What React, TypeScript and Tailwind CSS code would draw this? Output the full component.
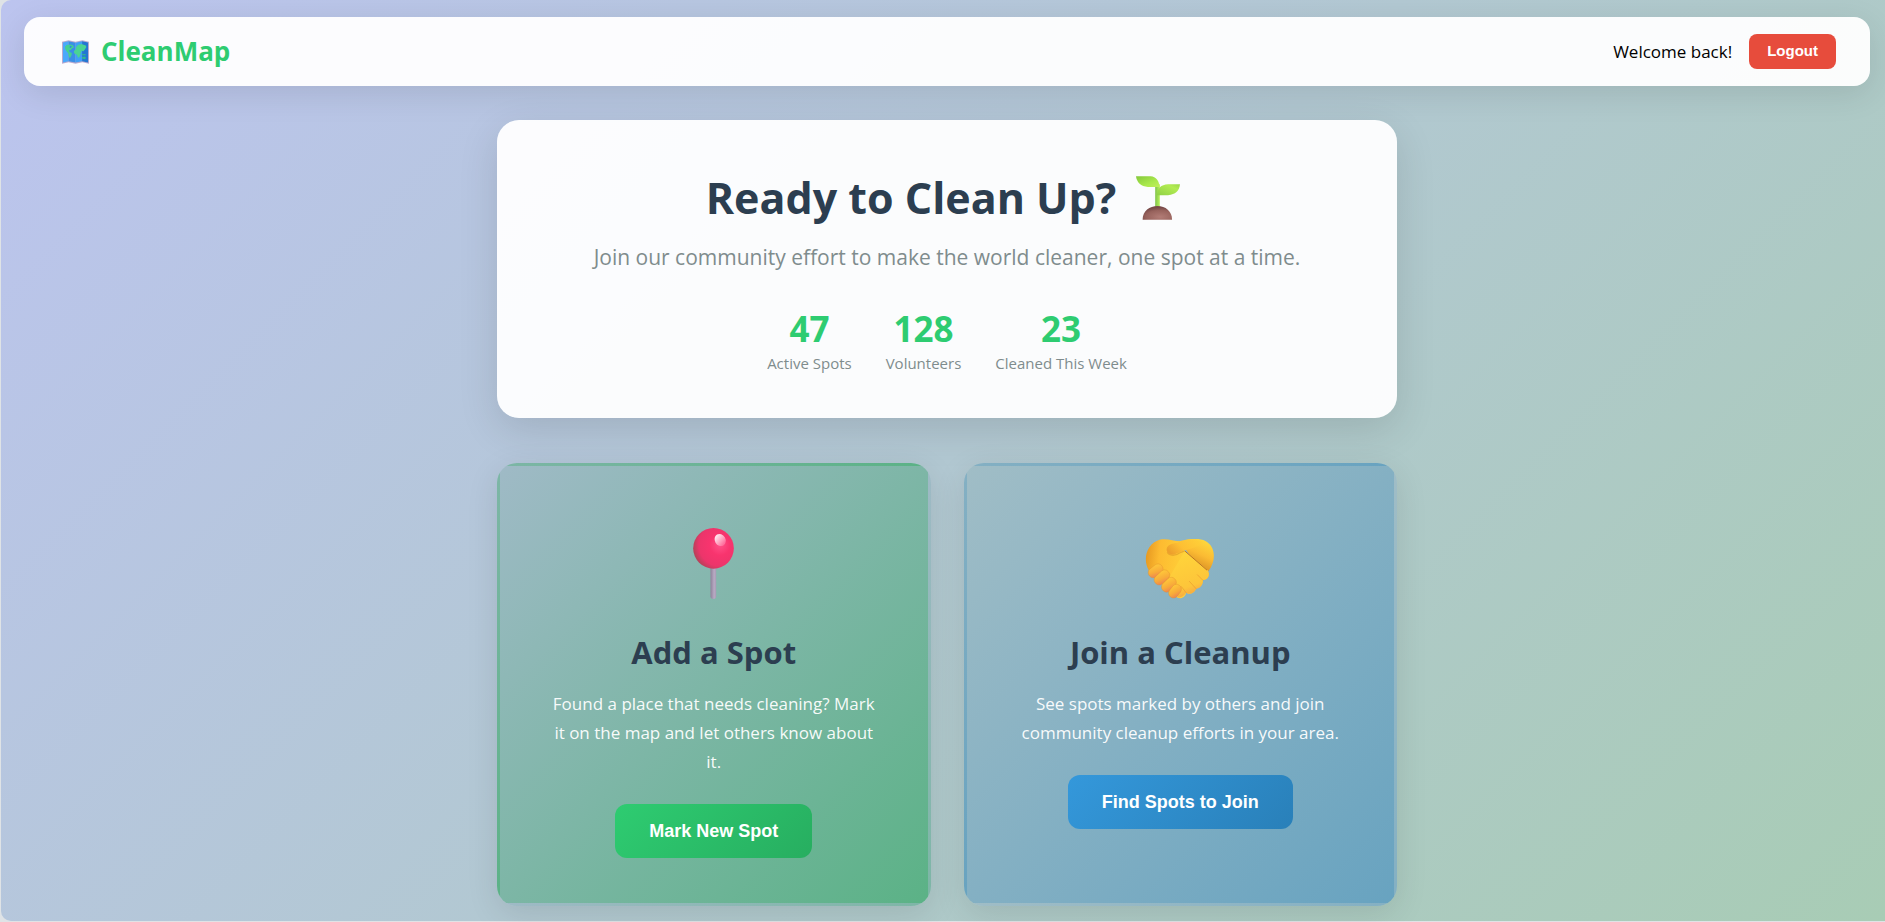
import { ReactNode } from "react"

type Stat = {
    value: string
    label: string
}

type ActionCardProps = {
    icon: ReactNode
    title: string
    description: string
    action: string
    cardClass: string
    buttonClass: string
}

const stats: Stat[] = [
    { value: "47", label: "Active Spots" },
    { value: "128", label: "Volunteers" },
    { value: "23", label: "Cleaned This Week" },
]

const MapIcon = () => (
    <svg viewBox="186 122 82 72" className="w-[27px] h-6" aria-hidden="true">
        <path d="M186 127 L206 122 L227 127 L248 122 L268 127 V194 L248 189 L227 194 L206 189 L186 194 Z" fill="#b9a9cf" />
        <path d="M189 129 L206 125 V186 L189 190 Z" fill="#4aa9fb" />
        <path d="M206 125 L227 130 V190 L206 186 Z" fill="#3a8fe6" />
        <path d="M227 130 L247 125 V186 L227 190 Z" fill="#3fa0f7" />
        <path d="M247 125 L265 129 V190 L247 186 Z" fill="#2377d2" />
        <path d="M195 142 L200 137 L213 135 L220 138 L222 144 L216 147 L213 152 L207 153 L209 158 L216 161 L215 168 L210 177 L206 170 L205 162 L199 155 L196 149 Z" fill="#45cf93" />
        <path d="M228 144 L234 137 L245 134 L258 138 L260 143 L256 150 L251 156 L246 154 L243 160 L240 172 L235 176 L231 166 L223 162 L222 155 L229 150 Z" fill="#4ad394" />
        <path d="M245 163 L251 165 L257 164 L258 168 L249 168 Z M247 173 L256 172 L259 176 L255 180 L247 178 Z" fill="#35b98c" />
        <path d="M210 139 l6 1 -3 6 -4 -2 Z" fill="#2f8be0" />
    </svg>
)

const SproutIcon = () => (
    <svg viewBox="163 78 133 131" className="mr-2 w-11 h-11" aria-hidden="true">
        <defs>
            <linearGradient id="leaf" x1="0" y1="0" x2="1" y2="1">
                <stop offset="0" stopColor="#84c83c" />
                <stop offset="0.6" stopColor="#a9e84c" />
                <stop offset="1" stopColor="#c1f05a" />
            </linearGradient>
            <linearGradient id="leafRight" x1="0" y1="1" x2="1" y2="0">
                <stop offset="0" stopColor="#8fd046" />
                <stop offset="0.7" stopColor="#b2ec52" />
                <stop offset="1" stopColor="#9bd848" />
            </linearGradient>
            <linearGradient id="stem" x1="0" y1="0" x2="1" y2="0">
                <stop offset="0" stopColor="#7fc24a" />
                <stop offset="1" stopColor="#b8f25a" />
            </linearGradient>
            <radialGradient id="soil" cx="0.6" cy="0.8" r="0.7">
                <stop offset="0" stopColor="#b27c76" />
                <stop offset="0.7" stopColor="#97625c" />
                <stop offset="1" stopColor="#784a48" />
            </radialGradient>
        </defs>
        <path d="M221 102 H235 V172 H221 Z" fill="url(#stem)" />
        <path d="M163 78 H207 C224 79 233 92 234 110 H199 C178 109 165 96 163 78 Z" fill="url(#leaf)" />
        <path d="M296 102 H260 C238 103 227 115 226 135 H260 C282 133 294 122 296 102 Z" fill="url(#leafRight)" />
        <path d="M183 209 C183 183 204 168 228 168 C252 168 272 184 272 209 Z" fill="url(#soil)" />
    </svg>
)

const PinIcon = () => (
    <svg viewBox="99 54 122 213" className="w-[41px] h-[71px]" aria-hidden="true">
        <defs>
            <radialGradient id="pinHead" cx="0.66" cy="0.42" r="0.72">
                <stop offset="0" stopColor="#ff5088" />
                <stop offset="0.35" stopColor="#f8346e" />
                <stop offset="0.72" stopColor="#ec356b" />
                <stop offset="1" stopColor="#a34552" />
            </radialGradient>
            <linearGradient id="pinStick" x1="0" y1="0" x2="1" y2="0">
                <stop offset="0" stopColor="#8d8199" />
                <stop offset="0.65" stopColor="#b8abc4" />
                <stop offset="1" stopColor="#a99ab5" />
            </linearGradient>
            <linearGradient id="pinShine" x1="0" y1="0" x2="0.3" y2="1">
                <stop offset="0" stopColor="#ffffff" />
                <stop offset="1" stopColor="#ff6f9d" />
            </linearGradient>
        </defs>
        <path d="M151 165 H168 V259 Q168 267 160 267 Q151 267 151 259 Z" fill="url(#pinStick)" />
        <circle cx="160" cy="115" r="61" fill="url(#pinHead)" />
        <ellipse cx="180" cy="90" rx="16" ry="19" transform="rotate(-30 180 90)" fill="url(#pinShine)" />
    </svg>
)

const HandshakeIcon = () => (
    <svg viewBox="77 86 209 181" className="w-[70px] h-[60px]" aria-hidden="true">
        <defs>
            <linearGradient id="palm" x1="0" y1="0.4" x2="1" y2="0.5">
                <stop offset="0" stopColor="#e89b22" />
                <stop offset="0.2" stopColor="#fdbb31" />
                <stop offset="0.7" stopColor="#ffd43a" />
                <stop offset="1" stopColor="#f9b233" />
            </linearGradient>
            <linearGradient id="backHand" x1="0.9" y1="0" x2="0.4" y2="1">
                <stop offset="0" stopColor="#ffdf3e" />
                <stop offset="0.5" stopColor="#fbbb33" />
                <stop offset="1" stopColor="#cf8320" />
            </linearGradient>
            <linearGradient id="finger" x1="0.8" y1="0" x2="0.2" y2="1">
                <stop offset="0" stopColor="#ffc93a" />
                <stop offset="0.6" stopColor="#f8ab3a" />
                <stop offset="1" stopColor="#ee8352" />
            </linearGradient>
            <linearGradient id="tips" x1="0.5" y1="0" x2="0.8" y2="1">
                <stop offset="0" stopColor="#ffd43a" />
                <stop offset="0.7" stopColor="#fdc53a" />
                <stop offset="1" stopColor="#f29448" />
            </linearGradient>
            <linearGradient id="thumb" x1="0" y1="0.6" x2="1" y2="0.2">
                <stop offset="0" stopColor="#eda02c" />
                <stop offset="0.4" stopColor="#fdbf33" />
                <stop offset="1" stopColor="#ffcf38" />
            </linearGradient>
        </defs>
        <path d="M180 93 C205 85 245 80 264 96 C287 112 292 150 267 183 L215 140 Z" fill="url(#backHand)" />
        <path d="M88 182 C66 145 84 98 120 88 C142 83 160 92 184 93 L196 122 L262 178 C273 188 270 210 250 210 C252 226 238 232 230 236 C224 252 208 254 200 248 C198 262 180 272 168 258 L100 200 Z" fill="url(#palm)" />
        <path d="M196 122 L262 178 C275 190 268 210 250 210 C252 228 240 236 230 236 C222 254 206 252 200 248 C190 262 178 266 172 258 L150 200 Z" fill="url(#tips)" />
        <path d="M197 123 L263 180" stroke="#b97422" strokeWidth="3" fill="none" />
        <path d="M250 210 L234 194 M230 236 L210 214 M200 248 L186 230" stroke="#e9972f" strokeWidth="3" strokeLinecap="round" opacity="0.6" />
        <path d="M143 126 C150 138 168 138 184 126 L196 122" stroke="#d88d25" strokeWidth="4" fill="none" opacity="0.5" />
        <path d="M182 94 C200 88 232 86 250 94 C240 108 214 116 196 120 C184 122 172 133 157 133 C140 132 136 113 148 105 C158 98 170 99 182 94 Z" fill="url(#thumb)" />
        <g stroke="#dc8a2c" strokeWidth="1">
            <rect x="84" y="167" width="48" height="30" rx="14" transform="rotate(-38 108 182)" fill="url(#finger)" />
            <rect x="101" y="187" width="52" height="30" rx="14" transform="rotate(-42 127 202)" fill="url(#finger)" />
            <rect x="123" y="209" width="50" height="30" rx="14" transform="rotate(-45 148 224)" fill="url(#finger)" />
            <rect x="144" y="229" width="44" height="29" rx="14" transform="rotate(-52 166 243)" fill="url(#finger)" />
        </g>
    </svg>
)

const ActionCard = ({ icon, title, description, action, cardClass, buttonClass }: ActionCardProps) => (
    <section className={`${cardClass} flex flex-col items-center rounded-[20px] border-3 border-transparent px-12 py-[45px] text-center shadow-[0_8px_32px_rgba(0,0,0,0.1)]`}>
        <div className="flex h-[88px] items-end justify-center">{icon}</div>
        <h2 className="mt-8 text-[31px] leading-[42px] font-bold text-[#2c3e50]">{title}</h2>
        <p className="mt-4 text-[17px] leading-[29px] text-white/95">{description}</p>
        <button
            type="button"
            className={`${buttonClass} mt-7 h-[54px] rounded-xl px-[34px] font-['Liberation_Sans',Arial,sans-serif] text-[18px] font-bold text-white`}
        >
            {action}
        </button>
    </section>
)

export default function App() {

    return (
        <div className="min-h-screen bg-[#dfe3e6] pb-px pl-px font-['Open_Sans','Noto_Sans',sans-serif]">
            <div className="min-h-[calc(100vh-1px)] rounded-l-[10px] bg-linear-[135deg,#bcc4ef,#a8ccb5] pt-[17px] pr-[15px] pb-3 pl-[23px]">

                <header className="flex h-[69px] items-center justify-between rounded-2xl bg-white/95 px-[34px] shadow-[0_8px_32px_rgba(0,0,0,0.1)]">
                    <div className="flex items-center gap-3 pl-1 text-[26px] font-bold text-[#2ecc71]">
                        <MapIcon />
                        <span>CleanMap</span>
                    </div>
                    <div className="flex items-center gap-[17px]">
                        <span className="text-[17px] text-black">Welcome back!</span>
                        <button
                            type="button"
                            className="h-[35px] rounded-lg bg-[#e74c3c] px-[18px] font-['Liberation_Sans',Arial,sans-serif] text-[15px] font-bold text-white"
                        >
                            Logout
                        </button>
                    </div>
                </header>

                <main className="mx-auto mt-[34px] max-w-[900px]">
                    <section className="flex flex-col items-center rounded-[22px] bg-white/95 px-12 pt-12 pb-11 text-center shadow-[0_12px_40px_rgba(0,0,0,0.12)]">
                        <h1 className="flex items-center gap-5 text-[43px] leading-[60px] font-bold text-[#2c3e50]">
                            Ready to Clean Up?
                            <SproutIcon />
                        </h1>
                        <p className="mt-3 text-[21px] leading-[34px] text-[#7f8c8d]">
                            Join our community effort to make the world cleaner, one spot at a time.
                        </p>
                        <dl className="mt-8 flex gap-[34px]">
                            {stats.map((stat) => (
                                <div key={stat.label} className="flex flex-col-reverse items-center">
                                    <dt className="text-[15px] leading-[22px] text-[#7f8c8d]">{stat.label}</dt>
                                    <dd className="text-[35px] leading-[46px] font-bold text-[#2ecc71]">{stat.value}</dd>
                                </div>
                            ))}
                        </dl>
                    </section>

                    <div className="mt-[45px] grid grid-cols-2 gap-[33px]">
                        <ActionCard
                            icon={<PinIcon />}
                            title="Add a Spot"
                            description="Found a place that needs cleaning? Mark it on the map and let others know about it."
                            action="Mark New Spot"
                            cardClass="bg-linear-[135deg,#9fbac6,#5bb286]"
                            buttonClass="bg-linear-[135deg,#2ecc71,#27ae60]"
                        />
                        <ActionCard
                            icon={<HandshakeIcon />}
                            title="Join a Cleanup"
                            description="See spots marked by others and join community cleanup efforts in your area."
                            action="Find Spots to Join"
                            cardClass="bg-linear-[135deg,#a0bdc6,#68a3c0]"
                            buttonClass="bg-linear-[135deg,#3498db,#2980b9]"
                        />
                    </div>
                </main>
            </div>
        </div>
    )
}
